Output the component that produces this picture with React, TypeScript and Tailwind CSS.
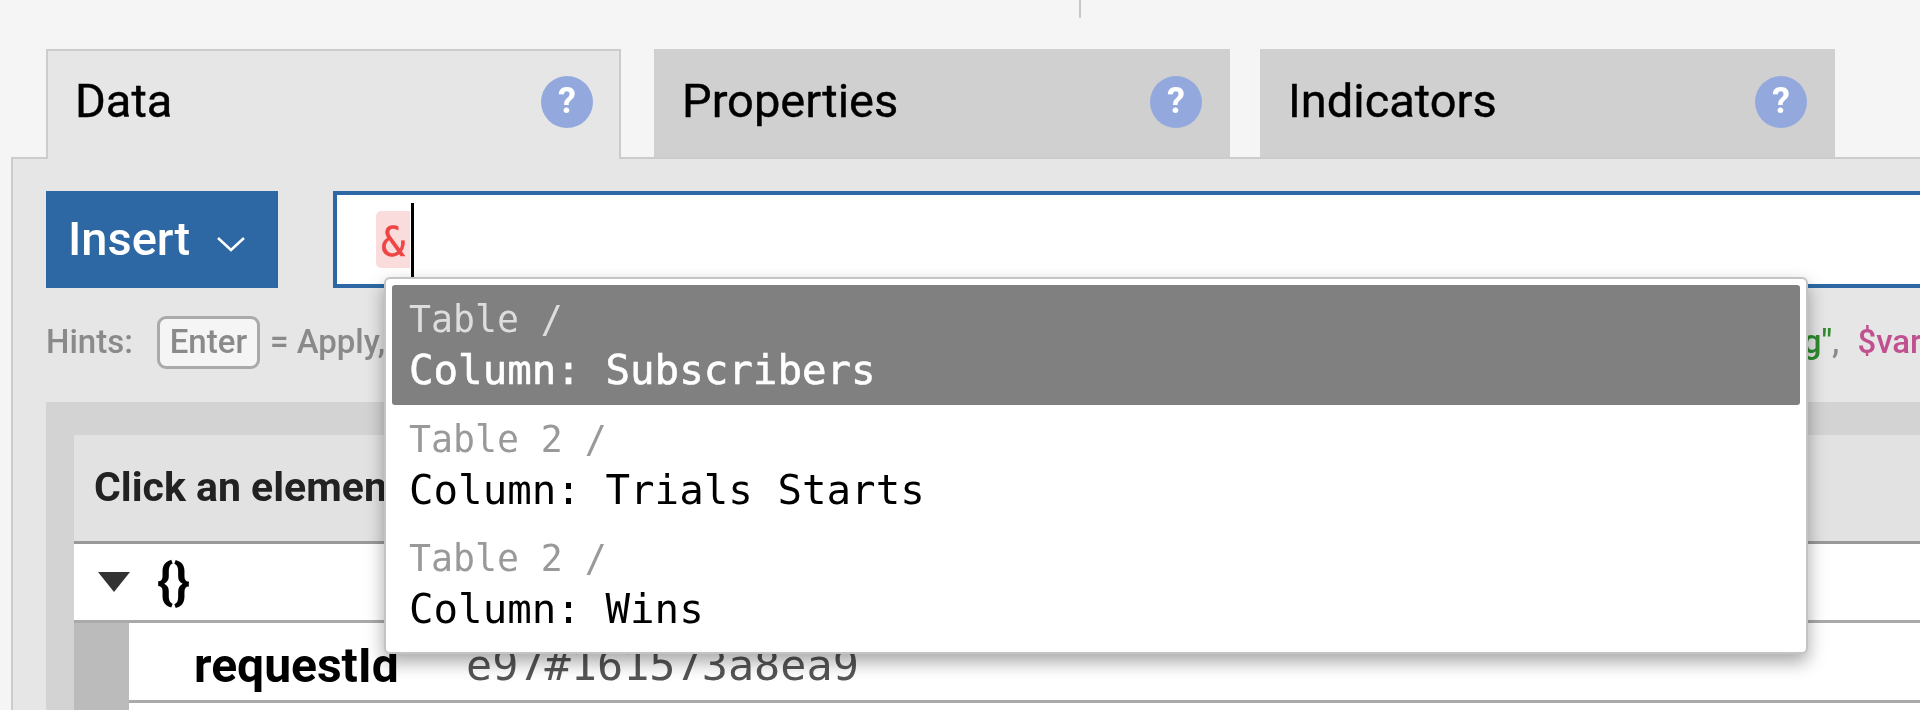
const tabs = [
  { label: "Data", active: true, width: "w-[575px]" },
  { label: "Properties", active: false, width: "w-[576px] ml-[33px]" },
  { label: "Indicators", active: false, width: "w-[575px] ml-[30px]" },
];

const suggestions = [
  { table: "Table /", column: "Column: Subscribers", selected: true },
  { table: "Table 2 /", column: "Column: Trials Starts", selected: false },
  { table: "Table 2 /", column: "Column: Wins", selected: false },
];

function HelpIcon() {
  return (
    <span className="mt-[2px] flex h-[52px] w-[52px] shrink-0 items-center justify-center rounded-full bg-[#93a9de] pb-[2px] text-[36px] font-bold leading-none text-white">
      ?
    </span>
  );
}

export default function App() {
  return (
    <div className="relative flex h-[710px] w-[1920px] flex-col overflow-hidden bg-[#f5f5f5] font-['Roboto',sans-serif] blur-[0.6px]">
      {/* top tick */}
      <div className="h-[49px]">
        <div className="ml-[1079px] h-[18px] w-[2px] bg-[#c8c8c8]" />
      </div>

      {/* tabs */}
      <div className="flex h-[108px] pl-[46px]">
        {tabs.map((tab) => (
          <div
            key={tab.label}
            className={`${tab.width} flex items-center justify-between text-[47px] text-black ${
              tab.active
                ? "relative z-10 -mb-[2px] h-[110px] border-x-2 border-t-2 border-[#cccccc] bg-[#e6e6e6] pb-[8px] pl-[27px] pr-[26px]"
                : "bg-[#d0d0d0] pb-[4px] pl-[28px] pr-[28px]"
            }`}
          >
            <span className="[-webkit-text-stroke:0.4px_black]">{tab.label}</span>
            <HelpIcon />
          </div>
        ))}
      </div>

      {/* panel */}
      <div className="ml-[11px] flex min-h-0 flex-1 flex-col border-l-2 border-t-2 border-[#cccccc] bg-[#e6e6e6] pt-[32px]">
        <div className="flex h-[97px] pl-[33px]">
          <button className="flex w-[232px] items-center bg-[#2d68a4] pl-[22px] text-[47px] font-medium text-white">
            Insert
            <svg className="ml-[26px] mt-[8px]" width="30" height="16" viewBox="0 0 30 16" fill="none" stroke="white" strokeWidth="2.5">
              <path d="M2 2l13 12L28 2" />
            </svg>
          </button>
          <div className="-mr-[6px] ml-[55px] flex flex-1 items-center border-[4px] border-[#2d68a4] bg-white pl-[39px]">
            <span className="flex h-[57px] w-[34px] items-center justify-center rounded-l-[5px] bg-[#fbdcdc] pt-[4px] font-['DejaVu_Sans_Mono',monospace] text-[40px] text-[#ee4444] [-webkit-text-stroke:0.5px_#ee4444]">
              &amp;
            </span>
            <span className="ml-[1px] h-[74px] w-[3px] bg-black" />
          </div>
        </div>

        {/* hints */}
        <div className="flex h-[114px] items-center whitespace-nowrap pb-[6px] pl-[33px] text-[33px] font-medium text-[#8a8a8a]">
          <span>Hints:</span>
          <span className="ml-[24px] flex h-[53px] w-[103px] shrink-0 items-center justify-center rounded-[9px] border-[3px] border-[#aaaaaa] bg-[#f5f5f5]">
            Enter
          </span>
          <span className="ml-[10px]">= Apply,</span>
          <span className="ml-[1342px] text-[#2e8b2e]">"string"</span>
          <span>,</span>
          <span className="ml-[18px] text-[#c0508f]">$variable</span>
        </div>

        {/* tree section */}
        <div className="ml-[33px] flex min-h-0 flex-1 flex-col bg-[#d3d3d3] pl-[28px] pt-[33px]">
          <div className="flex h-[106px] shrink-0 items-center bg-[#e2e2e2] pl-[20px] text-[41px] font-bold whitespace-nowrap text-[#222222]">
            Click an element to insert its path
          </div>
          <div className="flex h-[82px] shrink-0 items-center border-y-[3px] border-t-[#999999] border-b-[#aaaaaa] bg-white pl-[24px]">
            <svg width="32" height="20" viewBox="0 0 32 20" fill="#333333">
              <path d="M0 0h32L16 20z" />
            </svg>
            <span className="ml-[27px] text-[50px] font-bold text-black">{"{}"}</span>
          </div>
          <div className="flex h-[80px] shrink-0 bg-[#bbbbbb] pl-[55px]">
            <div className="flex flex-1 items-center border-b-[3px] border-[#aaaaaa] bg-white pl-[65px] pt-[8px] whitespace-nowrap">
              <span className="w-[272px] text-[48px] font-bold text-black">requestId</span>
              <span className="font-['DejaVu_Sans_Mono',monospace] text-[43.5px] text-[#555555]">e97#161573a8ea9</span>
            </div>
          </div>
          <div className="flex min-h-0 flex-1 bg-[#bbbbbb] pl-[55px]">
            <div className="flex-1 bg-white" />
          </div>
        </div>
      </div>

      {/* suggestion popup */}
      <div className="absolute left-[384px] top-[277px] z-20 w-[1424px] rounded-[6px] border-2 border-[#c4c4c4] bg-white px-[6px] pt-[6px] pb-[8px] font-['DejaVu_Sans_Mono',monospace] leading-[50px] shadow-[0_8px_18px_rgba(0,0,0,0.35)]">
        {suggestions.map((item) => (
          <div
            key={item.column}
            className={`h-[119.5px] rounded-[3px] pl-[17px] pt-[10px] whitespace-pre ${
              item.selected ? "bg-[#808080] text-white [-webkit-text-stroke:0.6px_white]" : "text-black"
            }`}
          >
            <div className={`text-[36.5px] ${item.selected ? "text-[#dddddd] [-webkit-text-stroke:0px]" : "text-[#999999]"}`}>{item.table}</div>
            <div className="text-[40.8px]">{item.column}</div>
          </div>
        ))}
      </div>
    </div>
  );
}
